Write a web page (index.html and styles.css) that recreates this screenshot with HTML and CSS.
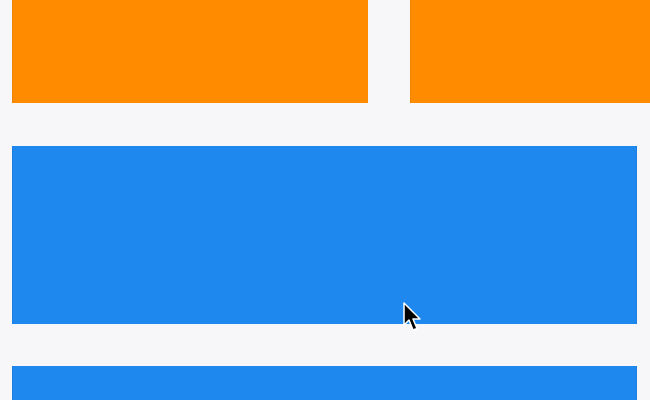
FILE: index.html
```html
<!DOCTYPE html>
<html>
<head>
<meta charset="utf-8">
<link rel="stylesheet" href="styles.css">
</head>
<body>
<div class="page">
  <div class="row">
    <div class="tile orange"></div>
    <div class="tile orange"></div>
  </div>
  <div class="card blue"></div>
  <div class="card blue"></div>
</div>
<svg class="cursor" width="18" height="30" viewBox="0 0 18 30">
  <path d="M1 1 L1 23 L6 18 L10 28 L14 26.5 L10 17 L17 17 Z" fill="#000" stroke="#fff" stroke-width="1.5" stroke-linejoin="round"/>
</svg>
</body>
</html>
```
FILE: styles.css
```css
html, body {
  margin: 0;
  padding: 0;
  background: #f7f6f9;
  overflow: hidden;
  width: 650px;
  height: 400px;
}
.page {
  display: flex;
  flex-direction: column;
  gap: 43px;
  padding-left: 12px;
}
.row {
  display: flex;
  gap: 42px;
}
.tile {
  width: 356px;
  height: 103px;
  flex: none;
}
.orange {
  background: #ff8c00;
  box-shadow: inset 1px 0 0 #f08300;
}
.card {
  width: 625px;
  height: 178px;
}
.card + .card { margin-top: -1px; }
.blue {
  background: #1e88ee;
  box-shadow: inset 1px 0 0 #1a7fe0, inset -1px 0 0 #1a7fe0;
}
.cursor {
  position: absolute;
  left: 403px;
  top: 302px;
}
```
